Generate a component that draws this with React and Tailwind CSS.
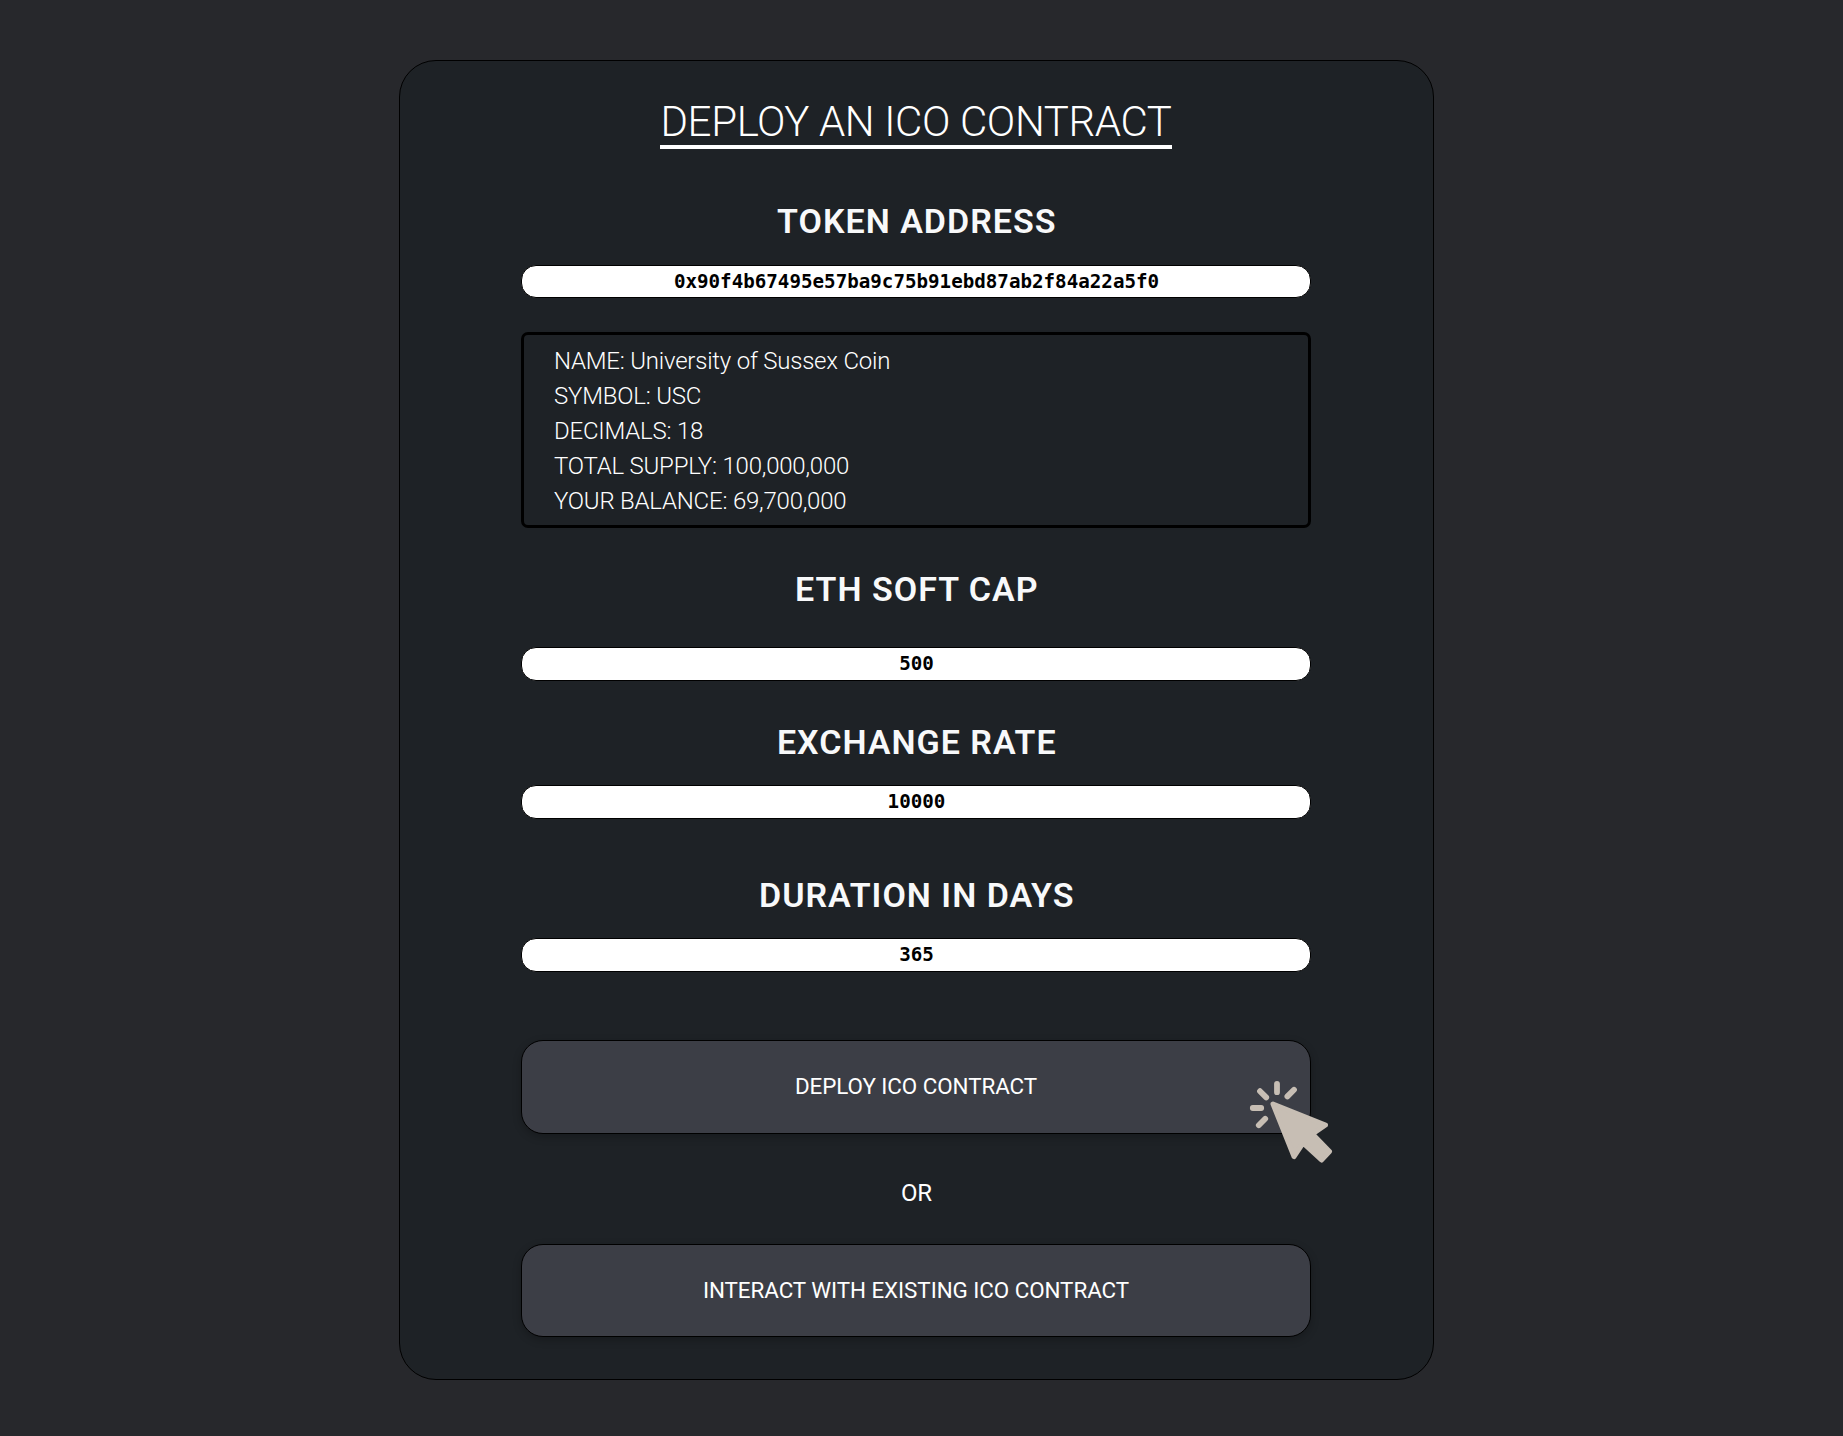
const INPUT =
  "block w-full rounded-[15px] border border-black bg-white p-0 pl-px text-center font-['DejaVu_Sans_Mono',monospace] text-[19.2px] font-bold text-black outline-none";

const BUTTON =
  "block w-full rounded-[22px] border border-black bg-[#3c3e46] text-[22.4px] font-normal tracking-[-0.06px] text-white shadow-[0_3px_8px_rgba(0,0,0,0.24)]";

function Label({ children }) {
  return (
    <h2 className="pl-[1.5px] text-center text-[34px] leading-[40px] font-semibold tracking-[1px] text-[#f8f9fa] antialiased">
      {children}
    </h2>
  );
}

function ClickCursor() {
  return (
    <svg className="absolute top-[40px] left-[728px] h-[84px] w-[84px]" viewBox="0 0 84 84" fill="#c7beb4" stroke="#c7beb4">
      <g strokeWidth="5.8" strokeLinecap="round">
        <path d="M28 3.800v8.400M11 11.200l6.200 6.200M45 9.800l-6.600 6.600M3.800 28h8.400M16.200 38.800l-6.400 6.400" />
      </g>
      <path d="M24 24L76.500 45L63.500 54L80.500 71.500L72.500 80L54 63L45 76.500Z" strokeWidth="5" strokeLinejoin="round" />
    </svg>
  );
}

const TOKEN = [
  ["NAME", "University of Sussex Coin"],
  ["SYMBOL", "USC"],
  ["DECIMALS", "18"],
  ["TOTAL SUPPLY", "100,000,000"],
  ["YOUR BALANCE", "69,700,000"],
];

export default function App() {
  return (
    <div className="h-[1436px] w-full overflow-hidden bg-[#27282c] pt-[60px] pl-[399px] font-[Roboto,sans-serif] text-white">
      <main className="h-[1320px] w-[1035px] rounded-[37px] border border-black bg-[#1e2226] pr-[122px] pl-[121px]">
        <h1 className="flex justify-center pt-[31px]">
          <span className="h-[57px] border-b-4 border-white text-[42px] leading-[59px] font-light tracking-[-0.36px] whitespace-nowrap">
            DEPLOY AN ICO CONTRACT
          </span>
        </h1>
        <section className="pt-[52px]">
          <Label>TOKEN ADDRESS</Label>
          <input className={INPUT + " mt-[24px] h-[33px]"} defaultValue="0x90f4b67495e57ba9c75b91ebd87ab2f84a22a5f0" />
        </section>
        <dl className="mt-[34px] h-[196px] rounded-[7px] border-3 border-black pt-[9px] pl-[30px] text-[24px] leading-[35px] font-light tracking-[-0.22px]">
          {TOKEN.map(([k, v]) => (
            <div key={k}>
              {k}: {v}
            </div>
          ))}
        </dl>
        <section className="pt-[41px]">
          <Label>ETH SOFT CAP</Label>
          <input className={INPUT + " mt-[38px] h-[34px] pb-[2px]"} defaultValue="500" />
        </section>
        <section className="pt-[41px]">
          <Label>EXCHANGE RATE</Label>
          <input className={INPUT + " mt-[23px] h-[34px] pb-[2px]"} defaultValue="10000" />
        </section>
        <section className="pt-[56px]">
          <Label>DURATION IN DAYS</Label>
          <input className={INPUT + " mt-[23px] h-[34px] pb-[2px]"} defaultValue="365" />
        </section>
        <div className="relative mt-[68px]">
          <button className={BUTTON + " h-[94px]"}>DEPLOY ICO CONTRACT</button>
          <ClickCursor />
        </div>
        <p className="mt-[39px] h-[40px] pl-px text-center text-[24px] leading-[40px] tracking-[-0.1px]">OR</p>
        <button className={BUTTON + " mt-[31px] h-[93px]"}>INTERACT WITH EXISTING ICO CONTRACT</button>
      </main>
    </div>
  );
}
